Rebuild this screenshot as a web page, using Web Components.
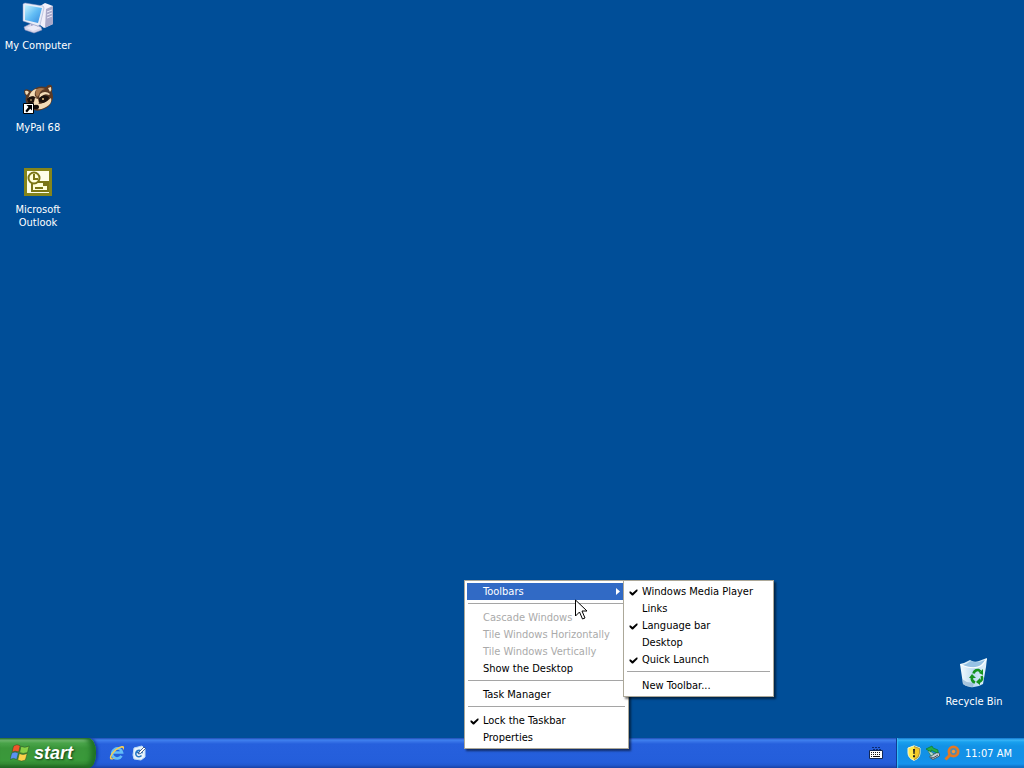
<!DOCTYPE html>
<html lang="en">
<head>
<meta charset="utf-8">
<title>Desktop</title>
<style>
html, body { height: 100%; margin: 0; }
body { font: 11px/13px Tahoma, "DejaVu Sans Condensed", "Noto Sans", sans-serif; overflow: hidden; }
</style>
</head>
<body>
<xp-desktop></xp-desktop>
<script>
const define = (name, html) => customElements.define(name, class extends HTMLElement {
  constructor() {
    super();
    const t = document.createElement('template');
    t.innerHTML = html;
    this.attachShadow({ mode: 'open' }).append(t.content.cloneNode(true));
  }
});

define('xp-shortcut', `
<style>
:host { display: block; width: 76px; height: 82px; }
button { width: 100%; padding: 2px 4px 0; border: 0; background: none; color: #fff; font: inherit; display: flex; flex-direction: column; align-items: center; gap: 5px; }
::slotted(svg) { width: 32px; height: 32px; }
span { text-align: center; white-space: nowrap; }
</style>
<button type="button"><slot name="icon"></slot><span><slot></slot></span></button>`);

define('xp-menu', `
<style>
:host { display: block; box-sizing: border-box; padding: 2px; background: #fff; border: 1px solid #aca899; box-shadow: 2px 2px 2px #0008; }
</style>
<div role="menu"><slot></slot></div>`);

define('xp-separator', `
<style>
:host { display: block; padding: 3px 1px 5px; }
hr { margin: 0; border: 0; height: 1px; background: #a5a5a5; }
</style><hr>`);

customElements.define('xp-item', class extends HTMLElement {
  constructor() {
    super();
    const on = this.hasAttribute('checked');
    const off = this.hasAttribute('disabled');
    const sub = this.hasAttribute('submenu');
    this.attachShadow({ mode: 'open' }).innerHTML = `
<style>
:host { display: block; color: #000; }
:host([disabled]) { color: #aaa; }
:host([submenu]) { color: #fff; background: #316ac5; }
button { width: 100%; height: 17px; padding: 0 2px 0 0; border: 0; background: none; color: inherit; font: inherit; display: grid; grid-template-columns: 16px 1fr 8px; align-items: center; text-align: left; white-space: nowrap; }
.tick { width: 9px; height: 9px; margin: 2px 0 0 3px; }
.arrow { width: 4px; height: 7px; }
</style>
<button type="button" role="${on ? 'menuitemcheckbox' : 'menuitem'}" ${on ? 'aria-checked="true"' : ''} ${off ? 'disabled' : ''}>
${on ? '<svg class="tick" viewBox="0 0 9 9"><path d="M.5 3.500h1.200L3.500 5 7.500 1.500H8.500V3L4 7.500H3L.5 5z"/></svg>' : '<i></i>'}
<span><slot></slot></span>
${sub ? '<svg class="arrow" viewBox="0 0 4 7"><path fill="#fff" d="M0 0l4 3.500L0 7z"/></svg>' : ''}
</button>`;
  }
});

define('xp-taskbar', `
<style>
:host { display: flex; height: 30px; color: #fff;
  background: linear-gradient(#1f4cb4 0, #3f82f0 2px, #3a78ea 3px, #2660dd 6px, #245edb 24px, #2159d0 27px, #1941a5 30px); }
button { border: 0; padding: 0; background: none; color: inherit; font: inherit; }
.start { width: 96px; display: flex; align-items: center; gap: 4px; padding: 0 0 0 10px; border-radius: 0 8px 8px 0 / 0 14px 14px 0;
  background: linear-gradient(#2b6b2d 0, #7bc07a 2px, #4ba54b 5px, #3a963a 10px, #3a993a 22px, #338a33 26px, #205f20 30px);
  box-shadow: inset -5px 0 5px #1f7224, 2px 0 3px #163f9f;
  font: italic bold 18px/24px "Liberation Sans", Arial, sans-serif; text-shadow: 1px 1px 2px #143c14; }
.start svg { width: 20px; height: 20px; }
.quick { display: flex; align-items: center; gap: 6px; padding-left: 13px; flex: 1; }
.quick svg, .tray svg, .lang svg { display: block; width: 16px; height: 16px; }
.lang { display: flex; align-items: center; padding-right: 12px; }
.tray { box-sizing: border-box; width: 128px; display: flex; align-items: center; gap: 3px; padding-left: 9px; border-left: 1px solid #113d93;
  background: linear-gradient(#0d6cc8 0, #3ab6f8 2px, #19a0ee 4px, #1292e6 8px, #1290e8 20px, #1493ed 26px, #0c63b8 30px); box-shadow: inset 1px 0 1px #37c0f8; }
time { padding-left: 2px; white-space: nowrap; }
</style>
<button class="start" type="button">
<svg viewBox="0 0 20 20"><g stroke="#274f22" stroke-width=".5">
<path fill="#f0562b" d="M3.500 3Q7 .5 10.200 2.700L8.700 9Q5 7.200 2 9.200z"/><path fill="#86cf46" d="M11 3.300Q14.500 5.500 19.200 3L17.500 9.500Q13 11.500 9.600 9.500z"/>
<path fill="#5a92f2" d="M1.700 10Q5 8 8.400 10L6.700 16.500Q3.500 14.300 0 16.500z"/><path fill="#fbd14a" d="M9.300 10.500Q13 12.500 17.200 10.400L15.400 17Q11.500 19.200 7.700 17z"/></g></svg>
<span>start</span></button>
<div class="quick">
<button type="button" aria-label="Internet Explorer"><svg viewBox="0 0 16 16"><path d="M12.500 10.800A5 5 0 1 1 13 7.500H4" fill="none" stroke="#64bdf8" stroke-width="2.600"/><path d="M2 14.500C-2 13 5 3 12 1.200c4-.8 3.600 2 1.700 4.300 1-3-.7-3.300-3-2.200C5 6 1 12.500 3 13.300c1 .4 2.300-.4 3.500-1C5 13.800 3.300 15 2 14.500z" fill="#f6cf53"/></svg></button>
<button type="button" aria-label="Show Desktop"><svg viewBox="0 0 16 16"><path fill="#e9f3fb" stroke="#bcdcf5" d="M3 3l8-2 3 3v8l-4 3-7-1-1-4z"/><path d="M10.500 10.500A3.200 3.200 0 1 1 11 7.500H5.500" fill="none" stroke="#2277c5" stroke-width="1.500"/><path d="M8 7l5-5 1.500 1.500-5 5-2 .5z" fill="#fff" stroke="#234474" stroke-width=".8"/></svg></button>
</div>
<div class="lang"><button type="button" aria-label="Language"><svg viewBox="0 0 16 16"><path d="M4 2.500h2M7 2.500h2M10 2.500h2M5 4.500h2M8 4.500h2M11 4.500h2" fill="none" stroke="#0e2c70"/><path fill="#fff" stroke="#102755" d="M1.500 5.500h13v8h-13z"/><path d="M3 7.500h10M3 9.500h10M3 11.500h2M11 11.500h2" stroke="#111" stroke-dasharray="1 1"/><path d="M5 11.500h6" stroke="#111"/></svg></button></div>
<div class="tray">
<svg viewBox="0 0 16 16"><path d="M8 .8L14 3v5q0 5-6 7.400Q2 13 2 8V3z" fill="#ffe94a" stroke="#faf6cf"/><path d="M8 1.500l5.500 2V8q0 4.500-5.500 7" fill="#f3c826" stroke="#85794a" stroke-width=".7"/><path d="M7 4h2l-.4 5H7.400zM7 10.300h2v2H7z" fill="#222"/></svg>
<svg viewBox="0 0 16 16"><path fill="#c7d0d5" stroke="#455a68" d="M5 11l8-4 1.500 2v2L8 14.500l-3-2z"/><path d="M6 12l2 1 5-3" stroke="#42515c" fill="none"/><path fill="#b8d6cd" stroke="#32765b" stroke-width=".7" d="M4 5l5 4-3 2-3-5z"/><path fill="#25ad49" stroke="#10762c" stroke-width=".7" d="M1 4l6-3 1 2 5 2v3l-3-1-4-2v2z"/></svg>
<svg viewBox="0 0 16 16"><circle cx="9.500" cy="6.500" r="4.700" fill="#548aaa" stroke="#e67822" stroke-width="2.600"/><circle cx="9.500" cy="6.500" r="1.700" fill="#f6973a"/><path d="M6 10l-4.500 4.500" stroke="#e27820" stroke-width="3"/></svg>
<time datetime="11:07">11:07 AM</time></div>`);

define('xp-desktop', `
<style>
:host { display: flex; flex-direction: column; height: 100%; position: relative; background: #004e98; }
main { flex: 1; display: flex; justify-content: space-between; min-height: 0; padding-right: 12px; }
.right { align-self: flex-end; }
.context { position: absolute; left: 464px; bottom: 19px; width: 165px; }
.sub { position: absolute; left: 623px; bottom: 71px; width: 151px; }
.pointer { position: absolute; left: 575px; bottom: 147px; width: 13px; height: 22px; }
</style>
<main>
<div>
<xp-shortcut><svg slot="icon" viewBox="0 0 32 32"><defs><linearGradient id="scr" x2="1" y2="1"><stop stop-color="#c9f4ff"/><stop offset=".5" stop-color="#62bdf5"/><stop offset="1" stop-color="#3488dd"/></linearGradient></defs>
<path fill="#f2f0fa" d="M18 4l5-3 8 3v18l-9 4-4-3z"/><path fill="#aaa9c9" d="M24 7l7-3v18l-8 4z"/><path d="M25 10l5-2m-5 5l5-2m-5 5l5-2" stroke="#ececfa"/><path fill="#d5d5ea" stroke="#8f91bb" stroke-width=".5" d="M2 25l8-4 9 4 1 3-8 3-9-3z"/><path fill="#a6a9cf" d="M9 20h7v7H9z"/><path fill="#ecebf8" d="M4 26l8-3 7 3-8 3z"/><path fill="#e8edf8" stroke="#969fc8" stroke-width=".5" d="M1 2l2-1 18 3 1 2-4 17-2 1L1 19z"/><path fill="url(#scr)" d="M3 3l17 3-4 15L3 18z"/></svg>My Computer</xp-shortcut>
<xp-shortcut><svg slot="icon" viewBox="0 0 32 32">
<path fill="#5a3a26" d="M2 7Q3 4 7 6l3 1Q15 1 24 3q2-3 5-2 2 1 1 7 2 5 0 9-2 6-8 8-6 3-10 1-6-2-8-8-1-4 0-6-2-2-2-5z"/>
<path fill="#f3dcb8" d="M3 7q2-1 4 1l-2 3q-2-1-2-4zM26 4l3-1q1 3-1 5zM8 10Q11 5 15 5q-3 3-2 7l2 2-4-2-5 3zM18 10q5-4 10 0l-1 1q-5-2-8 2l-2 1zM16 20q6 0 13-6 1 4-2 7-6 5-12 4z"/>
<path fill="#a87950" d="M15 5q4-2 8 0-5 1-6 6l-2 2q-3-4 0-8z"/>
<path fill="#1c120d" d="M5 15q3-4 8-2l-1 5-5 2zM17 14q5-5 10-1 0 4-6 6l-4-1z"/>
<path fill="#f3dcb8" d="M13 14l3 1 1 4-3 4-4-1 2-4z"/><ellipse cx="14" cy="23" rx="3" ry="2.200" fill="#120c0a"/><circle cx="21" cy="15" r="1" fill="#e9c58b"/><circle cx="9" cy="16" r=".8" fill="#e9c58b"/>
<path fill="#fff" stroke="#000" d="M1.500 19.500h10v10h-10z"/><path d="M4.500 21H10v5.500L8.200 24.700 5 28.500 3.300 27l3.200-4z"/></svg>MyPal 68</xp-shortcut>
<xp-shortcut><svg slot="icon" viewBox="0 0 32 32"><path fill="#85851b" d="M2 2h28v28H2z"/><path fill="#ffffe8" d="M5 5h22v22H5z"/><g fill="#ffffd8" stroke="#7a7615" stroke-width="2"><path d="M10 16h16v9H10z"/><circle cx="12" cy="12" r="5.500"/><path fill="none" d="M12 8v5h4M13 22h8"/></g><path fill="#7a7615" d="M21 17h4v3h-4z"/></svg>Microsoft<br>Outlook</xp-shortcut>
</div>
<div class="right">
<xp-shortcut><svg slot="icon" viewBox="0 0 32 32"><defs><linearGradient id="bin"><stop stop-color="#f4fbff"/><stop offset=".5" stop-color="#bddcf0"/><stop offset="1" stop-color="#e2f2fc"/></linearGradient></defs>
<path fill="url(#bin)" d="M2 6q5-1 10-4 4 3 9 1 5-2 8-3l-1 9-3 17q-6 4-13 3-5-1-7-3z"/>
<path fill="#96c2e4" d="M4 7q5-1 9-4 5 3 14-1-2 6-10 7T4 7z"/>
<path fill="none" stroke="#fbfeff" stroke-width="1.200" d="M2.500 6.500q13 6 21 1 3-3 5-6.500"/>
<path fill="#86aacb" opacity=".6" d="M4 21q6 5 12 3l-1 5q-7 0-10-3z"/>
<g fill="none" stroke="#15931f" stroke-width="2.600"><path d="M15.500 15.500q1-4 5-3.500l2 1.500M23.500 18q2 4-2.500 6M14 19q-1 4 3 5.500"/></g><path fill="#15931f" d="M21 15l4-4v6zM22 20v7l-4-3zM11 20l3-4 4 4z"/></svg>Recycle Bin</xp-shortcut>
</div>
</main>
<xp-taskbar></xp-taskbar>
<xp-menu class="context">
<xp-item submenu>Toolbars</xp-item><xp-separator></xp-separator>
<xp-item disabled>Cascade Windows</xp-item><xp-item disabled>Tile Windows Horizontally</xp-item><xp-item disabled>Tile Windows Vertically</xp-item><xp-item>Show the Desktop</xp-item><xp-separator></xp-separator>
<xp-item>Task Manager</xp-item><xp-separator></xp-separator>
<xp-item checked>Lock the Taskbar</xp-item><xp-item>Properties</xp-item>
</xp-menu>
<xp-menu class="sub">
<xp-item checked>Windows Media Player</xp-item><xp-item>Links</xp-item><xp-item checked>Language bar</xp-item><xp-item>Desktop</xp-item><xp-item checked>Quick Launch</xp-item><xp-separator></xp-separator><xp-item>New Toolbar...</xp-item>
</xp-menu>
<svg class="pointer" viewBox="0 0 13 22"><path fill="#fff" stroke="#000" d="M.5 1v16l4-4 3 7 2.500-1-3-7h5z"/></svg>`);
</script>
</body>
</html>
